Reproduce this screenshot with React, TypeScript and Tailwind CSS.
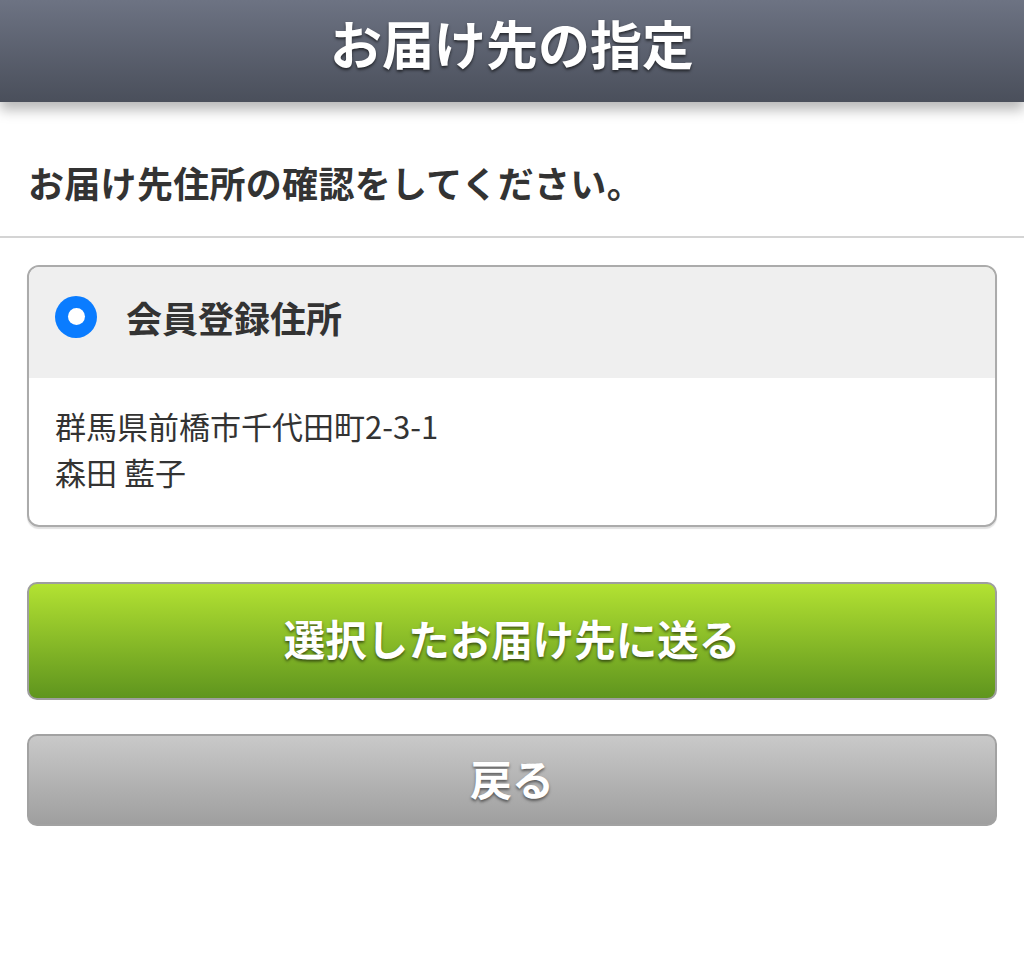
import React from "react";

export default function App() {
  return (
    <div className="min-h-[977px] bg-white font-['Noto_Sans_CJK_JP','Noto_Sans',sans-serif]">
      <header className="relative z-10 h-[102px] bg-gradient-to-b from-[#6d7383] to-[#4a4f5b] shadow-[0_8px_12px_rgba(0,0,0,0.28)] flex items-center justify-center">
        <h1 className="text-white text-[52px] font-bold leading-none mt-[-16px] [text-shadow:0_2px_3px_rgba(0,0,0,0.6)]">
          お届け先の指定
        </h1>
      </header>
      <div className="pt-[60px] pb-[34px] px-[28px] border-b-2 border-[#d4d4d4]">
        <p className="text-[36px] leading-[40px] font-bold text-[#333333] tracking-[0.3px]">
          お届け先住所の確認をしてください。
        </p>
      </div>
      <div className="px-[27px] pt-[27px]">
        <div className="border-2 border-[#ababab] rounded-[12px] overflow-hidden shadow-[0_2px_1px_rgba(0,0,0,0.12)]">
          <div className="h-[111px] bg-[#efefef] flex items-center pl-[26px] pb-[12px]">
            <span className="w-[42px] h-[42px] rounded-full bg-[#0a7cff] flex items-center justify-center">
              <span className="w-[17px] h-[17px] rounded-full bg-white" />
            </span>
            <span className="ml-[29px] text-[36px] font-bold text-[#333333] leading-none">
              会員登録住所
            </span>
          </div>
          <div className="pt-[25px] pb-[30px] pl-[26px] text-[31px] leading-[46px] text-[#333333]">
            <div>群馬県前橋市千代田町2-3-1</div>
            <div>森田 藍子</div>
          </div>
        </div>
        <button className="mt-[55px] w-full h-[118px] rounded-[10px] border-2 border-[#9e9e9e] bg-gradient-to-b from-[#b3e232] to-[#5f951e] flex items-center justify-center">
          <span className="text-white text-[41.5px] font-bold leading-none mt-[-4px] [text-shadow:0_2px_3px_rgba(0,0,0,0.55)]">
            選択したお届け先に送る
          </span>
        </button>
        <button className="mt-[34px] w-full h-[92px] rounded-[10px] border-2 border-[#a2a2a2] bg-gradient-to-b from-[#c9c9c9] to-[#9f9f9f] flex items-center justify-center">
          <span className="text-white text-[42px] font-bold leading-none mt-[-4px] [text-shadow:0_2px_3px_rgba(0,0,0,0.5)]">
            戻る
          </span>
        </button>
      </div>
    </div>
  );
}
